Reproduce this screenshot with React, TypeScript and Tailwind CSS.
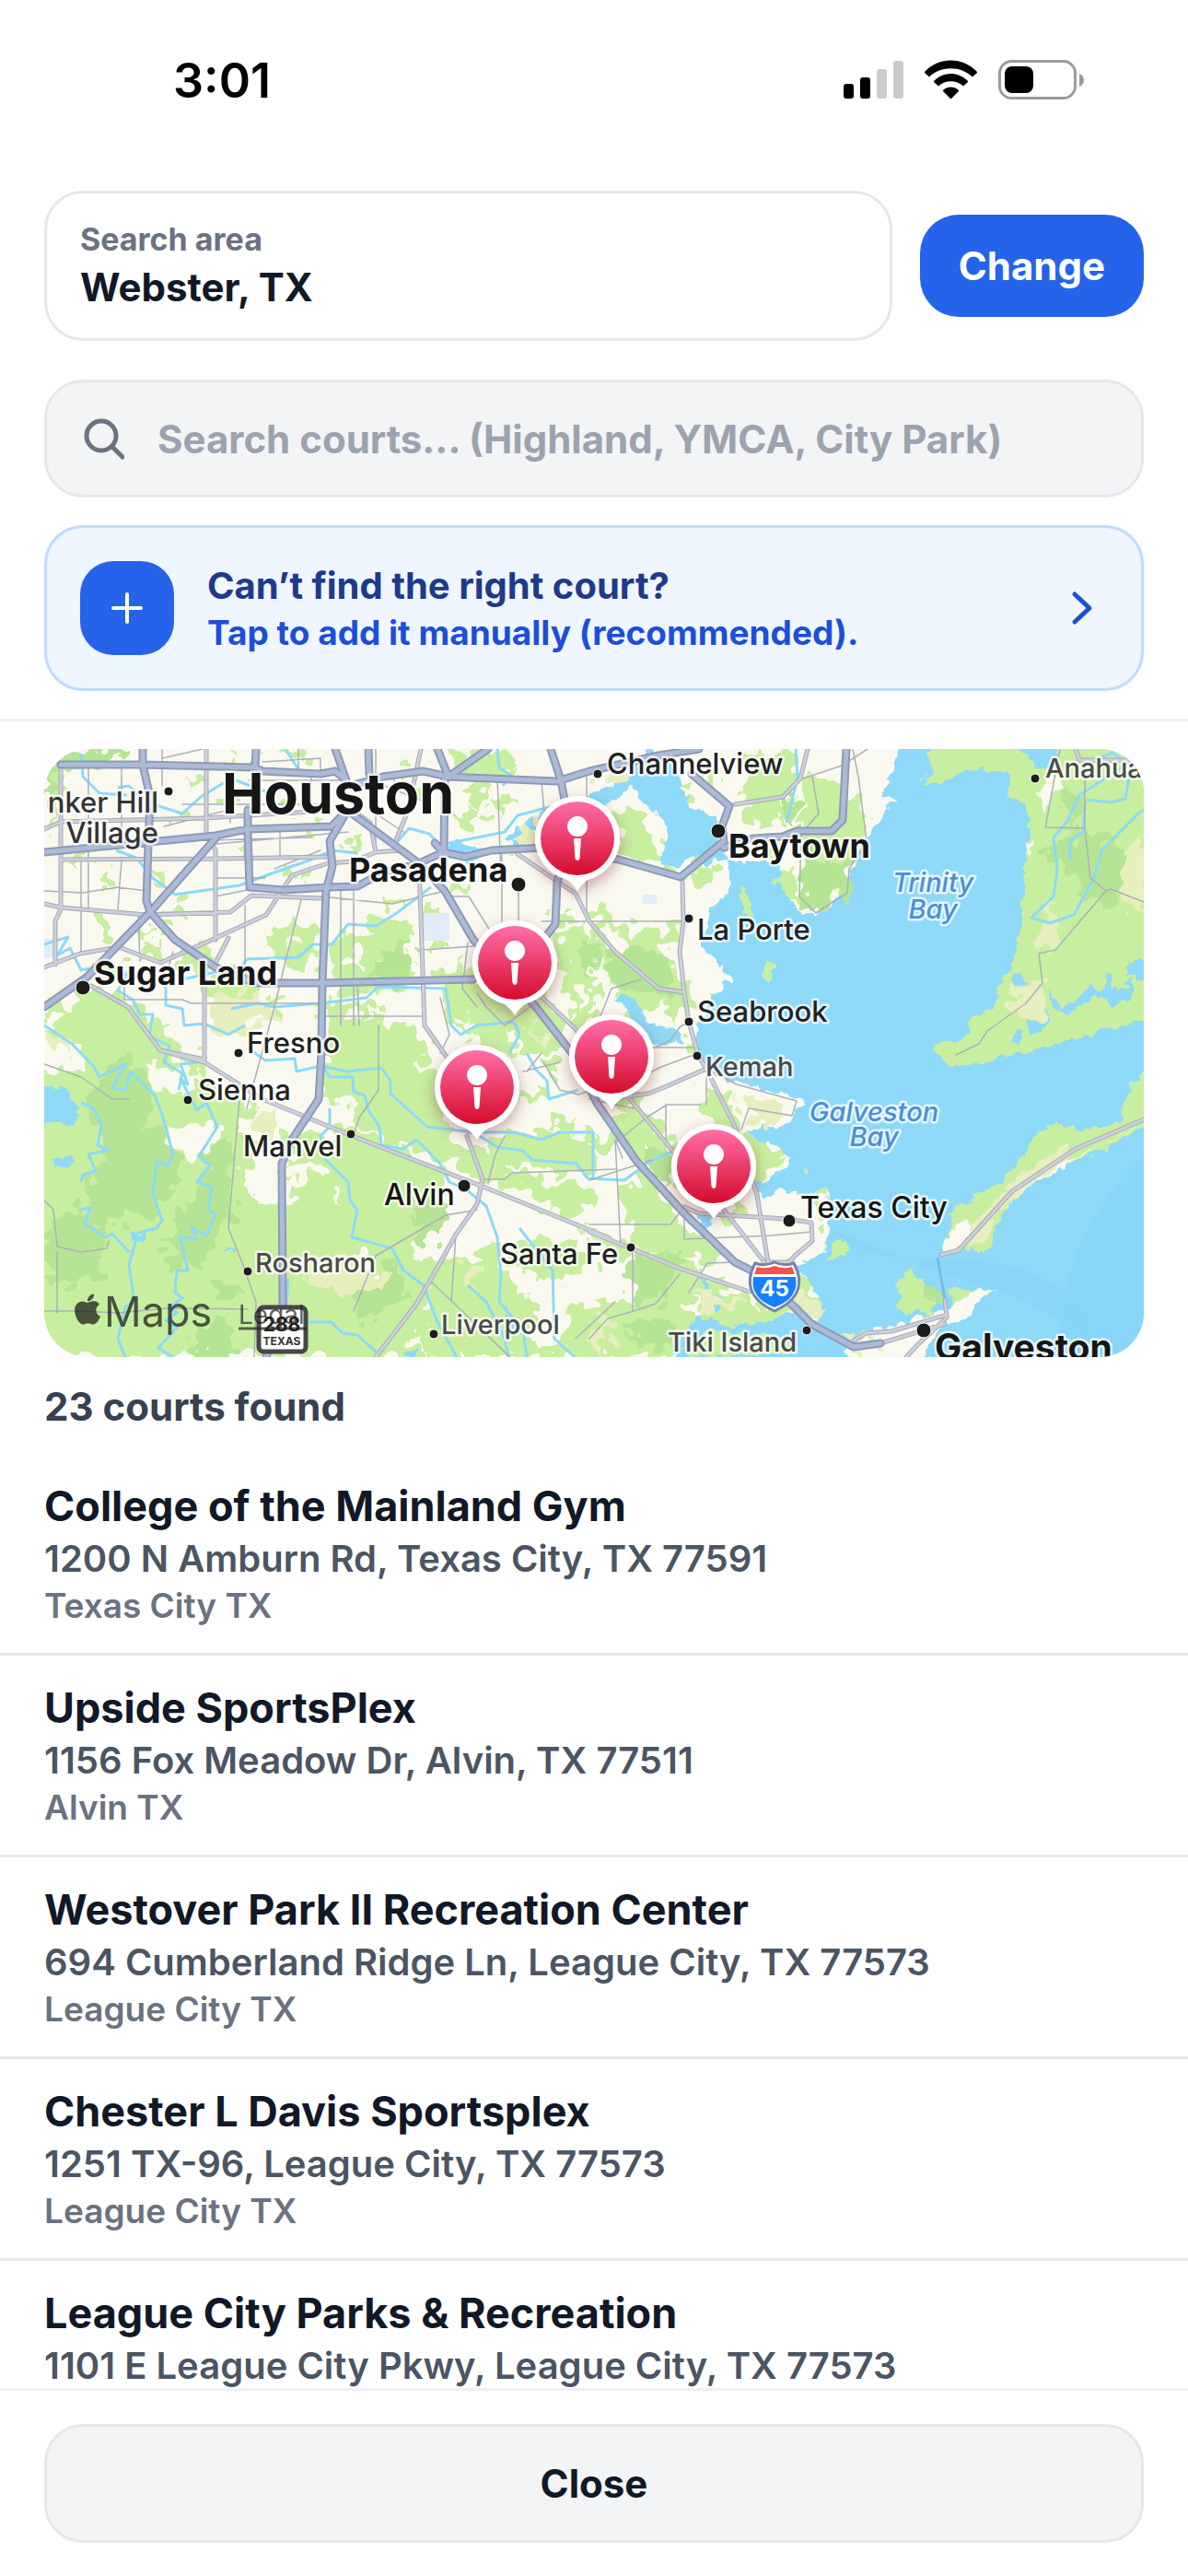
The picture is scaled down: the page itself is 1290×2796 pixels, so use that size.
import { FaApple } from "react-icons/fa";

const courts = [
  { name: "College of the Mainland Gym", address: "1200 N Amburn Rd, Texas City, TX 77591", area: "Texas City TX" },
  { name: "Upside SportsPlex", address: "1156 Fox Meadow Dr, Alvin, TX 77511", area: "Alvin TX" },
  { name: "Westover Park II Recreation Center", address: "694 Cumberland Ridge Ln, League City, TX 77573", area: "League City TX" },
  { name: "Chester L Davis Sportsplex", address: "1251 TX-96, League City, TX 77573", area: "League City TX" },
  { name: "League City Parks & Recreation", address: "1101 E League City Pkwy, League City, TX 77573", area: "League City TX" },
];

const greenAreas = [
  "M0 20L16 8 40 0H84V10L60 22 20 20 18 60 0 90Z",
  "M440 20L450 0H500L512 12 500 30H450Z M455 62H478V82H455Z M488 50L500 46 504 66 490 70Z",
  "M592 190L612 176 640 200 650 190 676 196 692 188 690 240 704 262 690 300 668 276 640 290 612 250 596 220Z",
  "M618 70L640 60 660 92 668 120 690 124 690 136 640 120 620 110Z",
  "M700 130L722 124 736 136 730 146 712 146Z",
  "M756 10L810 4 830 30 806 56 800 80 770 92 760 60Z",
  "M829 30L866 36 866 88 820 92 830 60Z M872 40L890 52 894 100 874 130 872 156 838 178 822 166 822 96Z",
  "M245 200L262 188 288 192 300 200 296 234 262 244 246 230Z",
  "M308 214L330 200 352 204 372 188 405 192 404 212 380 216 372 236 404 236 404 256 320 270 316 240Z",
  "M428 250L452 230 482 262 540 262 566 300 568 330 500 330 446 306Z",
  "M555 200L580 190 600 208 600 300 580 302 564 250Z",
  "M180 244L214 240 232 262 222 300 200 300 174 270Z",
  "M150 210L180 222 176 240 140 240Z",
  "M40 262L92 266 110 290 136 300 150 330 174 336 172 350 196 370 230 386 212 412 230 440 222 496 262 486 340 440 366 470 402 440 440 474 410 520 398 546 440 560 492 540 500 570 540 610 520 640 660 660H40L-30 660 -30 600V348L40 350 44 330 0 300Z",
  "M330 330L360 336 400 340 440 374 430 410 462 430 500 434 510 460 560 470 600 480 590 505 540 500 480 470 420 440 340 410 330 370Z",
  "M304 276L350 290 400 300 420 330 400 350 330 350 330 380 304 384Z",
  "M262 420L310 410 350 420 420 450 440 470 400 490 366 480 330 460 262 470Z",
  "M490 500L530 510 590 520 600 560 560 580 510 560Z M480 420L560 414 600 430 600 460 540 460 490 446Z",
  "M380 336L430 350 444 390 410 410 360 396Z",
  "M592 520L640 540 690 560 760 592 786 610 780 650 750 660H592L560 640 580 600 640 600 646 560 600 540Z",
  "M622 480L660 470 690 510 746 550 700 556 640 540 630 500Z",
  "M712 370L740 376 758 410 792 430 808 446 798 460 772 474 750 450 730 420Z",
  "M610 400L650 390 680 420 690 450 650 440 610 430Z",
  "M590 340L630 350 650 400 600 380Z",
  "M782 580L812 560 828 580 846 604 838 620 812 610 780 620Z",
];

const darkGreenAreas = [
  "M0 20L40 0H84V10L60 20 16 18 0 70Z",
  "M40 380L66 350 92 330 120 370 110 400 140 430 150 470 130 500 60 520 40 480 66 440Z",
  "M0 520L30 500 66 520 60 570 30 590 0 560Z",
  "M130 530L160 480 190 476 196 520 170 560 140 560Z",
  "M180 430L205 420 204 500 176 540 168 480Z",
  "M165 624H210V660H165Z M184 570L220 590 210 598 184 590Z",
  "M333 590L380 560 400 600 340 618Z M400 500L440 480 430 530 404 530Z",
  "M822 100L874 130 870 158 838 178 824 170Z M800 60L830 50 812 90Z",
  "M612 220L650 214 680 240 690 270 640 260 612 250Z",
  "M630 560L680 540 690 560 660 600 640 600Z M630 630L680 620 690 650 650 652Z",
  "M650 440L685 430 690 454 670 470Z",
  "M346 250L372 260 400 240 396 210 372 218Z",
  "M580 206L604 210 600 240 584 236Z",
  "M1080 110L1130 90 1180 110 1186 150 1150 176 1120 140Z M1108 60L1124 36 1130 70 1112 96Z",
  "M960 578L978 590 962 602Z",
];

const sandAreas = [
  "M178 272L230 262 248 282 240 300 200 308 172 290Z M0 300L20 310 30 332 4 316Z",
  "M225 400L252 388 256 412 240 426Z M270 560L312 548 336 558 352 566 370 572 370 590 330 590 300 590Z",
  "M460 560L480 552 466 584 458 580Z M532 300L548 306 546 320 534 320Z",
  "M750 380L790 376 810 396 784 410 764 400Z M704 590L760 594 756 606 710 606Z M820 590L846 600 836 620 810 600Z",
  "M1050 264L1090 248 1092 286 1072 300 1046 282Z M1080 200L1098 160 1102 210 1086 222Z M1172 120L1194 90V180L1176 160Z",
  "M600 26L640 22 640 40 616 44Z M592 640L604 610 618 640 600 660Z",
  "M500 90L540 80 548 100 520 112Z M862 640L890 634 908 642 880 650Z",
];

const whitePatches = [
  "M136 408L176 402 190 420 168 440 140 436Z M222 440L252 438 250 472 220 474Z M266 448L302 452 286 472 270 466Z",
  "M315 484L330 480 328 500Z M340 540L366 560 350 568 340 556Z M460 510L500 470 560 506 600 540 540 530 486 540Z",
  "M400 540L430 514 440 530 416 560Z M394 640L412 630 408 660Z M410 590L422 582 418 600Z",
  "M110 340L150 344 170 352 160 368 120 372Z M268 380L300 384 320 400 306 420 280 410Z M390 200L402 206 398 226Z",
  "M600 200L620 196 640 220 624 228Z M666 216L690 210 692 230 672 234Z M720 106L742 110 740 130Z",
  "M600 570L650 560 652 580 620 590Z M700 600L714 606 712 622Z M504 300L522 310 512 330Z",
  "M330 222L342 216 344 232 334 236Z M356 232L366 228 364 244 356 246Z M260 206L272 202 274 214 262 216Z",
  "M576 260L590 256 594 280 580 284Z M450 290L466 286 470 300 456 304Z M530 270L544 270 540 284Z",
];

// [x, y, width, height]
const parks = [
  [199, 8, 6, 8], [256, 2, 26, 12], [246, 48, 18, 10], [138, 70, 10, 9], [136, 168, 20, 14], [55, 136, 18, 6],
  [62, 146, 12, 8], [116, 130, 12, 12], [32, 110, 12, 12], [100, 192, 14, 10], [108, 210, 22, 16], [56, 230, 28, 18],
  [60, 186, 14, 16], [126, 188, 8, 12], [224, 6, 10, 8], [280, 76, 14, 10], [326, 96, 14, 14], [382, 20, 16, 8],
  [396, 40, 10, 16], [460, 40, 22, 18], [486, 24, 24, 12], [506, 94, 22, 14], [440, 146, 16, 10], [262, 130, 22, 10],
  [194, 50, 16, 10], [214, 110, 10, 8], [162, 32, 14, 8], [592, 48, 14, 12], [372, 160, 22, 10], [350, 184, 20, 12],
  [410, 166, 14, 22], [424, 200, 10, 18], [538, 174, 10, 8], [552, 176, 20, 10], [448, 258, 20, 10], [340, 278, 30, 10],
  [236, 270, 20, 12], [310, 286, 26, 14], [64, 286, 22, 14], [10, 280, 24, 14], [716, 26, 14, 16], [690, 40, 10, 20],
  [786, 110, 12, 14], [640, 236, 16, 12], [700, 318, 14, 10], [724, 260, 10, 14], [596, 420, 14, 18], [640, 462, 16, 12],
  [540, 340, 18, 10], [516, 372, 24, 10], [548, 400, 26, 12], [700, 520, 14, 10], [742, 500, 18, 12], [838, 484, 10, 30],
];

const highways = [
  "M18 17H107L229 20 237 24 300 27 316 24 328 34",
  "M107 0V17L115 52 113 104 111 165 115 177",
  "M230 0L229 20",
  "M316 0L328 34 M352 0L353 27",
  "M332 40L368 30 411 24 439 30 557 35 592 24 667 7 711 0",
  "M427 0L439 30 482 0",
  "M550 0L561 34 566 60 568 110 557 144 555 190 542 207",
  "M435 30L434 110",
  "M0 112L186 94 221 87 312 84 328 67",
  "M221 66V90L223 150 261 153 308 150 340 149 368 134 407 124 433 112",
  "M424 102L433 112 457 117 486 110 542 107 624 120 691 139 738 100 736 84 744 62 703 27",
  "M328 69L310 100 313 127 306 154 302 254 301 330 298 380 269 424 258 450 259 604 241 660",
  "M334 70L407 124 435 154 466 207 534 280 573 330 600 384 643 447 695 504 750 557 770 567 813 604 833 624 879 649 908 645",
  "M186 97L115 177 47 247 0 280",
  "M115 177L142 207 186 237 229 254 302 254 466 250",
  "M871 0L867 77 855 89 817 89 802 95 770 97 738 107",
];

const mainRoads = [
  "M693 144L694 187 690 220 695 264 700 297 711 334 719 347 750 410 774 484 786 557",
  "M628 370L683 437 738 500 782 557",
  "M592 524L637 542 691 564 766 589",
  "M126 327L174 340 237 380 332 419 474 474 612 530",
  "M459 420L476 467 470 494 447 527 419 577 403 604 360 660",
  "M695 497L711 504 806 510 833 514 834 534 815 550 809 557H786",
  "M1194 402L1120 434 1051 480 993 544 974 549",
  "M978 597L980 617 948 647 936 660",
  "M879 642L892 634 920 632 980 614 M908 645L978 624",
  "M829 0L821 32 802 52 750 60",
  "M514 114L577 157 592 187 620 220 667 260 695 264",
  "M1120 0L1124 12H1185",
  "M0 237L39 222 81 215 126 232 182 207 241 180 269 137 308 124 336 122 360 112 387 110",
  "M18 20V174L12 187V234",
  "M18 120L186 119 308 117",
  "M0 168L18 172 111 180 202 177 225 159 300 162",
  "M0 87L18 79 174 75 308 67",
  "M176 0V90L186 110V207",
  "M409 0L395 67 380 104 M360 112L354 80 340 70",
  "M407 124L413 300 439 337",
  "M174 240V334 M51 257L91 280 126 327 174 337",
  "M538 267L577 304 600 340 M610 380L656 374 676 366 719 347",
  "M186 232L200 205",
];

const thinRoads =
  "M48 20V174 M84 20V100 M40 120V220 M84 120L80 174 M0 154L42 156 80 150 111 154 M128 0V40 M128 10L172 0 " +
  "M150 60H300 M130 84L200 66 M140 100L290 96 M176 104L330 90 M186 140H240 M186 160L236 150 M202 40V80 M256 90V119 " +
  "M237 14L300 10 M276 0V24 M300 10V24 M222 34H330 M290 30V70 M370 40L420 60 M360 70L390 90 M380 30V60 M250 130L300 110 " +
  "M360 110V0 M322 150V300 M336 150V300 M300 160L378 168 435 154 M435 160H461L486 200 M413 218L466 214 M460 210L454 260 470 280 " +
  "M300 290H413 M340 250L342 300 M280 160L262 230 250 280 220 390 M218 170V255 M102 180L104 230 M140 220L134 240 " +
  "M87 240V272H150L160 276 302 276 M430 270L440 310 430 330 M470 265L480 280 500 300 M500 300L530 278 M497 114V200 M515 150V200 " +
  "M540 187H592 M592 187H693 M589 30V180 M540 35L544 80 M492 30L496 140 M363 300V370L342 400 336 419 M600 300L616 260 648 250 " +
  "M0 342L40 356 74 380H92 M14 546V612 M0 610L40 610 80 612 134 607 221 608 M0 490L10 500 14 540 40 546 68 542 70 534 " +
  "M212 380L206 450 200 520 216 560 230 600 228 660 M336 610L360 550 436 506 470 500 M447 527L442 600 M419 577L506 660 " +
  "M476 467H500L508 460 620 456 M592 516H680L695 497 M628 444L620 424 626 540 M695 504V532L790 528 834 524 " +
  "M639 544V610 M592 640L612 618 640 610 664 602 690 570 M700 590L720 558 750 557 M719 347L752 364 817 382 812 398 765 390 757 413 " +
  "M712 386H676L654 400 622 426 M675 387V424 M719 355V386 M592 468L660 446 M640 360L670 345 705 332 M592 380L640 390 " +
  "M878 0L884 30 893 100 874 130 872 156 838 178 820 160 822 92 841 70 834 30 M824 32L866 18 894 0 M663 324L680 316 690 302 700 296 M660 324H705 " +
  "M1103 0L1087 85 1130 86 1136 140 1153 154 1158 152 1194 166 M1130 15V86 M1153 154L1098 218 1080 222 1084 254 1066 276 1024 306 1015 320 990 332 " +
  "M542 340L560 370 580 375 612 364 M540 330L524 350 M500 420L490 440 482 470 M520 350L560 340 M577 640L620 600";

const rivers = [
  "M40 5L42 30 60 48 90 50 M80 42L92 40 112 58 150 70 170 52 196 36",
  "M262 0L276 22 M208 34L240 46 260 44 M492 0L494 20 506 28 498 40",
  "M78 110L100 118 118 140 142 158 212 148 250 134 290 120 313 110 340 113 M384 100L396 86 418 92 430 104 460 98 500 90 514 72 560 60",
  "M420 150L400 165 380 180 360 192 330 190 312 212 292 212 276 226 220 228 214 236 150 250",
  "M0 212L26 204 14 224 28 216 40 240 60 236 M92 240L80 262 96 272 104 288 118 288 114 312 136 322 130 340 150 352 146 370",
  "M0 300L30 320 54 345 60 356 88 342 74 368 88 370 94 350 120 376 128 396 140 440 134 452 122 448 118 482 128 512 122 520 102 525 92 560 98 600 88 605 80 640 88 660",
  "M132 250L132 278 150 282 152 300 174 298 200 310 218 300 M203 282L232 276 250 280 300 276 350 270 362 258 436 260 442 300 452 310 470 300 510 296 516 310 505 330",
  "M226 328L240 338 272 336 274 350 300 344 330 350 366 346 376 360 376 374 416 410 466 416 492 432 520 436 530 446 578 450 590 466 630 468 660 446 690 434",
  "M302 344L310 356 335 356 336 372 348 376 352 392 364 410 366 430 390 434 404 424 430 450 440 470 458 478 480 496 492 530 496 570 494 600 520 630 524 660",
  "M460 416L510 416 540 424 560 416H596V466",
  "M310 390L310 410 300 420 304 444 330 470 332 490 340 500 334 530 378 542 390 566 412 582 426 620 448 660",
  "M167 340L148 342 156 364 148 358 166 392 176 384 188 410 168 442 180 452 166 470 182 475 178 500 186 505 176 528 160 520 166 532 148 530 156 566 144 566 142 590 150 596 136 606 144 612 132 620 144 628 124 650 140 660",
  "M40 384L54 390 62 408 58 430 70 435 48 440 56 458 42 462 40 470 M40 500L50 498 44 515 66 530 74 526 92 546",
  "M265 575L262 622 312 622 324 634 340 636 362 656 M516 520L552 566 554 640 576 660 M460 582L480 600 500 640 504 660",
  "M816 0L818 30 812 56 806 80 M524 330L534 348 546 360 548 380 580 370",
  "M1130 16L1160 4 1180 18 1174 54 1158 58 1132 55 M1170 20L1124 50 1110 80 1096 96 1100 130 1096 160 1072 183 1092 189 1118 180 1140 140 1146 120 1148 110 1188 70 1194 66 M1130 60L1128 90 1114 100V120",
];

// [x, y, radius]
const dots = [
  [135, 46, 5], [515, 147, 8], [42, 259, 8], [211, 330, 5], [156, 381, 5], [333, 418, 5], [456, 474, 7],
  [221, 567, 5], [423, 635, 5], [637, 541, 5], [601, 27, 5], [732, 89, 8], [700, 184, 5], [700, 296, 5],
  [709, 333, 5], [1076, 32, 5], [809, 512, 7], [828, 631, 5], [955, 631, 8],
];

const labels = [
  { text: "Houston", x: 193, y: 70, className: "text-[61px] font-bold fill-[#161616]" },
  { text: "Pasadena", x: 331, y: 144, className: "text-[36px] font-bold fill-[#161616]" },
  { text: "Sugar Land", x: 54, y: 256, className: "text-[36px] font-bold fill-[#161616]" },
  { text: "Baytown", x: 743, y: 118, className: "text-[36px] font-bold fill-[#161616]" },
  { text: "Galveston", x: 967, y: 663, className: "text-[39px] font-bold fill-[#161616]" },
  { text: "Alvin", x: 369, y: 495, className: "text-[32px] font-medium fill-[#161616]" },
  { text: "Texas City", x: 821, y: 509, className: "text-[32px] font-medium fill-[#161616]" },
  { text: "Fresno", x: 220, y: 330, className: "text-[31px] font-medium fill-[#222]" },
  { text: "Sienna", x: 167, y: 381, className: "text-[31px] font-medium fill-[#222]" },
  { text: "Manvel", x: 216, y: 442, className: "text-[31px] font-medium fill-[#222]" },
  { text: "Santa Fe", x: 495, y: 559, className: "text-[31px] font-medium fill-[#222]" },
  { text: "Channelview", x: 611, y: 27, className: "text-[31px] font-medium fill-[#222]" },
  { text: "La Porte", x: 709, y: 207, className: "text-[31px] font-medium fill-[#222]" },
  { text: "Seabrook", x: 709, y: 296, className: "text-[31px] font-medium fill-[#222]" },
  { text: "Rosharon", x: 229, y: 568, className: "text-[29px] font-medium fill-[#4a4a4a]" },
  { text: "Liverpool", x: 431, y: 635, className: "text-[29px] font-medium fill-[#4a4a4a]" },
  { text: "Kemah", x: 718, y: 355, className: "text-[29px] font-medium fill-[#4a4a4a]" },
  { text: "Tiki Island", x: 677, y: 654, className: "text-[29px] font-medium fill-[#4a4a4a]" },
  { text: "Anahuac", x: 1087, y: 31, className: "text-[29px] font-medium fill-[#4a4a4a]" },
  { text: "nker Hill", x: 124, y: 69, className: "text-[31px] font-medium fill-[#333] [text-anchor:end]" },
  { text: "Village", x: 124, y: 102, className: "text-[31px] font-medium fill-[#333] [text-anchor:end]" },
  { text: "Trinity", x: 965, y: 155, className: "text-[29px] font-medium italic fill-[#4a8fd6] [text-anchor:middle]" },
  { text: "Bay", x: 965, y: 184, className: "text-[29px] font-medium italic fill-[#4a8fd6] [text-anchor:middle]" },
  { text: "Galveston", x: 901, y: 404, className: "text-[29px] font-medium italic fill-[#4a8fd6] [text-anchor:middle]" },
  { text: "Bay", x: 901, y: 431, className: "text-[29px] font-medium italic fill-[#4a8fd6] [text-anchor:middle]" },
];

const pins = [
  [579, 97],
  [511, 232],
  [616, 334],
  [470, 367],
  [727, 453],
];

function StatusIcons() {
  return (
    <svg viewBox="0 0 264 44" className="h-11 w-[264px]" aria-hidden="true">
      {/* Signal */}
      <rect x="0" y="26" width="11" height="16" rx="3" />
      <rect x="18" y="19" width="11" height="23" rx="3" />
      <rect x="36" y="10" width="11" height="32" rx="3" fill="#cbcbcb" />
      <rect x="54" y="1" width="11" height="41" rx="3" fill="#cbcbcb" />
      {/* Wifi */}
      <path d="M88.500 12.500C104 -3.500 129 -3.500 144.500 12.500Q145.500 13.500 144.500 14.500L140 18.500C127 6 106 6 93 18.500L88.500 14.500Q87.500 13.500 88.500 12.500Z" />
      <path d="M98.500 22.500C108.500 12.500 124.500 12.500 134.500 22.500Q135.500 23.500 134.500 24.500L130 28.500C122.500 21.500 110.500 21.500 103 28.500L98.500 24.500Q97.500 23.500 98.500 22.500Z" />
      <path d="M108.500 32.500C113 28.500 120 28.500 124.500 32.500Q125.500 33.500 124.500 34.500L116.500 42.500 108.500 34.500Q107.500 33.500 108.500 32.500Z" />
      {/* Battery */}
      <rect x="169.500" y="1.500" width="82" height="40" rx="13" fill="none" stroke="#9b9b9b" strokeWidth="3" />
      <rect x="175" y="7" width="31" height="29" rx="8" />
      <path d="M256 15Q261 17 261 22T256 29Z" fill="#9b9b9b" />
    </svg>
  );
}

function Pin({ x, y }: { x: number; y: number }) {
  return (
    <g transform={`translate(${x} ${y})`}>
      <g filter="url(#pin-shadow)" fill="#fff">
        <circle r="46" />
        <path d="M-20 40Q-6 46 0 57 6 46 20 40Z" />
      </g>
      <circle r="40" fill="url(#pin-fill)" />
      <circle cy="-13" r="11" fill="#fff" />
      <path d="M-4 0H4L2.500 22Q0 26-2.500 22Z" fill="#fff" />
    </g>
  );
}

function CourtMap() {
  return (
    <svg viewBox="0 0 1194 660" className="block w-full rounded-[48px] font-['Inter',sans-serif]" role="img" aria-label="Map of courts">
      <defs>
        <linearGradient id="pin-fill" x1="0" y1="0" x2="0" y2="1">
          <stop offset="0" stopColor="#ff6ea8" />
          <stop offset="1" stopColor="#d60b2c" />
        </linearGradient>
        <filter id="pin-shadow" x="-50%" y="-50%" width="200%" height="200%">
          <feDropShadow dx="0" dy="6" stdDeviation="8" floodColor="#5a1020" floodOpacity="0.35" />
        </filter>
        {/* Breaks up straight polygon edges */}
        <filter id="rough" filterUnits="userSpaceOnUse" x="-40" y="-40" width="1274" height="740">
          <feTurbulence type="fractalNoise" baseFrequency="0.06" numOctaves="2" seed="4" />
          <feDisplacementMap in="SourceGraphic" scale="42" xChannelSelector="R" yChannelSelector="G" />
        </filter>
        <filter id="shore" filterUnits="userSpaceOnUse" x="-40" y="-40" width="1274" height="740">
          <feTurbulence type="fractalNoise" baseFrequency="0.09" numOctaves="2" seed="9" />
          <feDisplacementMap in="SourceGraphic" scale="14" xChannelSelector="R" yChannelSelector="G" />
        </filter>
      </defs>

      {/* Land */}
      <rect width="1194" height="660" fill="#faf9ef" />
      <g filter="url(#rough)">
        <path d={greenAreas.join("")} fill="#c8eea0" />
        {parks.map(([x, y, w, h]) => (
          <rect key={`${x}-${y}`} x={x} y={y} width={w} height={h} fill="#c8eea0" />
        ))}
        <path d={whitePatches.join("")} fill="#faf9ef" />
      </g>

      {/* Water */}
      <g fill="#8fd9f8" filter="url(#shore)">
        <path d="M928 -20L926 19 908 50 926 54 896 90 875 127 873 154 839 179 817 177 807 147 798 124 742 120 746 149 722 177 713 214 730 232 746 250 726 270 707 300 711 334 730 355 825 382 809 409 782 409 762 420 790 427 811 442 798 460 774 474 782 487 800 475 817 484 851 477 853 520 845 549 813 560 829 580 847 604 837 620 817 610 786 620 750 627 711 617 691 640 671 680H1214V-20Z" />
        <path d="M655 0L672 10 688 26 700 60 712 66 730 78 732 104 742 120 722 124 700 116 690 128 668 122 676 90 664 66 650 60 640 40 612 62 592 64V50L620 36 640 20Z" />
        <path d="M560 60L540 66 520 84 500 96 514 106 544 84 568 72Z M436 104L452 100 478 108 464 124 446 116Z" />
        <path d="M620 270L640 268 650 290 664 300 690 304 694 316 670 322 648 310 636 286Z M-20 368L20 366 40 390 30 408 -20 404Z M6 446L30 442 32 452 12 454Z M96 526L110 522 108 534 96 536Z M198 542L210 542 204 550Z" />
        <path d="M712 560L716 606 730 612 740 600 736 590 724 596Z M710 505L726 508 716 520Z M502 606L520 630 510 642Z M392 655L404 652 402 660H392Z" />
      </g>
      <path d="M850 520Q900 560 980 556T1110 590Q1150 620 1130 640 1080 600 1040 590T850 520Z" fill="#7fd3f7" opacity="0.4" />
      <path d="M1194 440Q1120 520 1110 590T1090 660H1194Z" fill="#84d3f8" opacity="0.6" />

      {/* East shore, peninsula and islands */}
      <g filter="url(#shore)">
        <g fill="#c8eea0">
          <path d="M972 -20L960 7 966 20 952 37 975 37 1000 22 1045 25 1050 50 1066 60 1070 80 1067 110 1064 150 1062 180 1058 210 1050 235 1042 250 1030 280 1019 284 1001 300 1001 314 966 319 970 334 991 345 1035 335 1086 324 1146 307 1214 290V-20H1102L1098 20 1082 22 1060 0Z" />
          <path d="M1214 330L1177 370 1171 404 1126 414 1098 407 1078 415 1063 444 1039 470 1003 490 981 504 987 520 974 537 976 549 1003 540 1017 549 1027 540 1035 510 1066 477 1106 454 1153 434 1214 400Z" />
          <path d="M940 565L970 590 964 612 928 610 926 577Z M860 532L874 536 874 546 850 556Z M786 226L794 240 788 252 780 248Z M756 146L766 160 772 190 766 196 758 170Z M826 455L834 460 826 464Z M790 140L812 130 822 170 810 160Z" />
          <path d="M983 584L1010 588 984 606Z M700 650L720 630 812 640 810 656 700 660Z" />
        </g>
        <path d="M1090 30L1110 30 1086 68 1078 50Z M1066 102L1072 100 1070 120Z M983 606L1010 588 1033 587 1003 612 968 637 948 680H900L869 652 892 632 928 624Z M976 549L974 537 1000 510 1010 520 990 545Z M1035 510L1066 477 1106 454 1214 396 1160 426 1106 450 1070 470Z" fill="#faf9ef" />
        <path d="M1066 4L1102 0 1080 24Z M1214 230L1194 250 1176 246 1178 230Z M1090 255L1104 282 1120 270 1136 256 1148 264 1154 240 1164 262 1184 250 1182 272 1160 278 1140 268 1110 290 1096 280Z M1068 296L1094 284 1086 306 1070 310Z M1048 310L1062 308 1060 320 1046 318Z M1050 246L1060 240 1070 256 1054 258Z" fill="#8fd9f8" />
      </g>

      <g filter="url(#rough)">
        <path d={darkGreenAreas.join("")} fill="#b5e494" />
        <path d={sandAreas.join("")} fill="#e6efbd" />
      </g>
      <path d="M1005 520L1050 470 1110 430 1116 442 1070 474 1036 500 1020 536 1006 540Z" fill="#e6efbd" filter="url(#shore)" />
      <path d="M412 178H440V208H412Z M0 206H12V226L0 228Z M650 158H665V168H650Z" fill="#e1ecf6" />

      <path d={rivers.join("")} fill="none" stroke="#8bdaf8" strokeWidth="3" strokeLinejoin="round" />

      {/* Roads */}
      <g fill="none" strokeLinejoin="round" strokeLinecap="round">
        <path d={thinRoads} stroke="#aab0bd" strokeWidth="1.500" />
        <path d={mainRoads.join("")} stroke="#a5a9b8" strokeWidth="5" />
        <path d={mainRoads.join("")} stroke="#ccd0da" strokeWidth="3" />
        <path d={highways.join("")} stroke="#8c9aba" strokeWidth="9" />
        <path d={highways.join("")} stroke="#adbad6" strokeWidth="5" />
      </g>
      <path d="M970 552L978 597" stroke="#74bde2" strokeWidth="3" />

      {/* Places */}
      <g className="fill-[#1c1c1c] stroke-white stroke-1">
        {dots.map(([x, y, r]) => (
          <circle key={`${x}-${y}`} cx={x} cy={y} r={r} />
        ))}
      </g>
      <g stroke="#ffffff" strokeOpacity="0.75" strokeWidth="5" strokeLinejoin="round" paintOrder="stroke">
        {labels.map((label) => (
          <text key={`${label.text}-${label.y}`} x={label.x} y={label.y} className={label.className}>
            {label.text}
          </text>
        ))}
      </g>

      {/* Road shields */}
      <g>
        <path d="M772 558Q782 562 793 557 804 562 814 558 832 592 793 610 754 592 772 558Z" fill="#fff" stroke="#7584ad" strokeWidth="3" />
        <path d="M774 562Q783 565 793 561 803 565 812 562L815 570H771Z" fill="#f4554a" />
        <path d="M770 573H816Q820 596 793 606 766 596 770 573Z" fill="#1480fb" />
        <text x="793" y="594" className="fill-white text-[24px] font-bold [text-anchor:middle]">45</text>
        <rect x="233" y="606" width="51" height="48" rx="5" fill="#fff" stroke="#474747" strokeWidth="5" />
        <text x="258" y="632" className="fill-[#222] text-[21px] font-bold [text-anchor:middle]">288</text>
        <text x="258" y="647" className="fill-[#333] text-[12px] font-bold [text-anchor:middle]">TEXAS</text>
      </g>

      {pins.map(([x, y]) => (
        <Pin key={`${x}-${y}`} x={x} y={y} />
      ))}

      {/* Attribution */}
      <g opacity="0.7">
        <FaApple x="28" y="589" size={38} color="#101010" />
        <text x="65" y="627" className="fill-[#101010] text-[45px]">Maps</text>
      </g>
      <a href="#legal">
        <text x="211" y="624" className="fill-[#222] text-[28px] opacity-70">Legal</text>
        <path d="M211 629H285" stroke="#222" strokeWidth="3" opacity="0.7" />
      </a>
    </svg>
  );
}

export default function App() {
  return (
    <div className="flex h-screen flex-col overflow-hidden bg-white font-['Inter','Liberation_Sans',sans-serif]">
      {/* Status bar */}
      <div className="flex h-[207px] shrink-0 items-start justify-between pt-[60px] pr-[110px] pl-[188px]">
        <span className="text-[52px] leading-[56px] font-semibold text-black">3:01</span>
        <div className="pt-[5px]">
          <StatusIcons />
        </div>
      </div>

      {/* Search header */}
      <header className="flex shrink-0 flex-col border-b-[3px] border-[#edf0f4] px-12 pb-[30px]">
        <div className="flex items-center gap-[30px]">
          <div className="flex h-[163px] flex-1 flex-col justify-center gap-1 rounded-[42px] border-[3px] border-[#e5e7eb] px-9">
            <span className="text-[34px] leading-[42px] font-bold text-[#6b7280]">Search area</span>
            <span className="text-[42px] leading-[54px] font-bold text-[#111827]">Webster, TX</span>
          </div>
          <button type="button" className="h-[111px] rounded-[42px] bg-[#2563eb] px-[42px] text-[42px] font-bold text-white">
            Change
          </button>
        </div>

        <label className="mt-[42px] flex h-32 items-center gap-9 rounded-[42px] border-[3px] border-[#e5e7eb] bg-[#f3f4f6] px-9">
          <svg viewBox="0 0 48 48" className="size-12 shrink-0" fill="none" stroke="#6b7280" strokeLinecap="round" aria-hidden="true">
            <circle cx="23" cy="21" r="16" strokeWidth="5" />
            <path d="M35 33L46 44" strokeWidth="5" />
          </svg>
          <input
            type="text"
            aria-label="Search courts"
            placeholder="Search courts... (Highland, YMCA, City Park)"
            className="min-w-0 flex-1 bg-transparent text-[42px] font-bold text-[#111827] outline-none placeholder:text-[#9ca3af]"
          />
        </label>

        <button type="button" className="mt-[30px] flex h-[180px] items-center rounded-[42px] border-[3px] border-[#bfdbfe] bg-[#eff6ff] px-9 text-left">
          <span className="flex size-[102px] shrink-0 items-center justify-center rounded-[36px] bg-[#2563eb]">
            <svg viewBox="0 0 36 36" className="size-9" stroke="white" strokeWidth="4" strokeLinecap="round" aria-hidden="true">
              <path d="M18 3V33M3 18H33" />
            </svg>
          </span>
          <span className="ml-9 flex flex-1 flex-col pt-0.5">
            <span className="text-[40px] leading-[52px] font-bold text-[#1e3a8a]">Can’t find the right court?</span>
            <span className="text-[37px] leading-[50px] font-bold text-[#1d4ed8]">Tap to add it manually (recommended).</span>
          </span>
          <svg viewBox="0 0 24 38" className="mr-4 h-[38px] w-6" fill="none" stroke="#1d4ed8" strokeWidth="5" strokeLinecap="round" strokeLinejoin="round" aria-hidden="true">
            <path d="M4 4L20 19 4 34" />
          </svg>
        </button>
      </header>

      {/* Results */}
      <main className="min-h-0 flex-1 overflow-hidden">
        <div className="px-12 pt-[30px]">
          <CourtMap />
          <p className="mt-[27px] mb-6 text-[42px] leading-[54px] font-bold text-[#374151]">23 courts found</p>
        </div>
        <ul>
          {courts.map((court) => (
            <li key={court.name} className="border-b-[3px] border-[#e5e7eb] px-12 py-[30px]">
              <h2 className="text-[45px] leading-[54px] font-bold text-[#111827]">{court.name}</h2>
              <p className="text-[40px] leading-[60px] font-semibold text-[#4b5563]">{court.address}</p>
              <p className="text-[37px] leading-[42px] font-semibold text-[#6b7280]">{court.area}</p>
            </li>
          ))}
        </ul>
      </main>

      <footer className="shrink-0 border-t-[3px] border-[#edf0f4] bg-white px-12 py-9">
        <button type="button" className="h-[129px] w-full rounded-[42px] border-[3px] border-[#e5e7eb] bg-[#f3f4f6] text-[42px] font-bold text-[#111827]">
          Close
        </button>
      </footer>
    </div>
  );
}
